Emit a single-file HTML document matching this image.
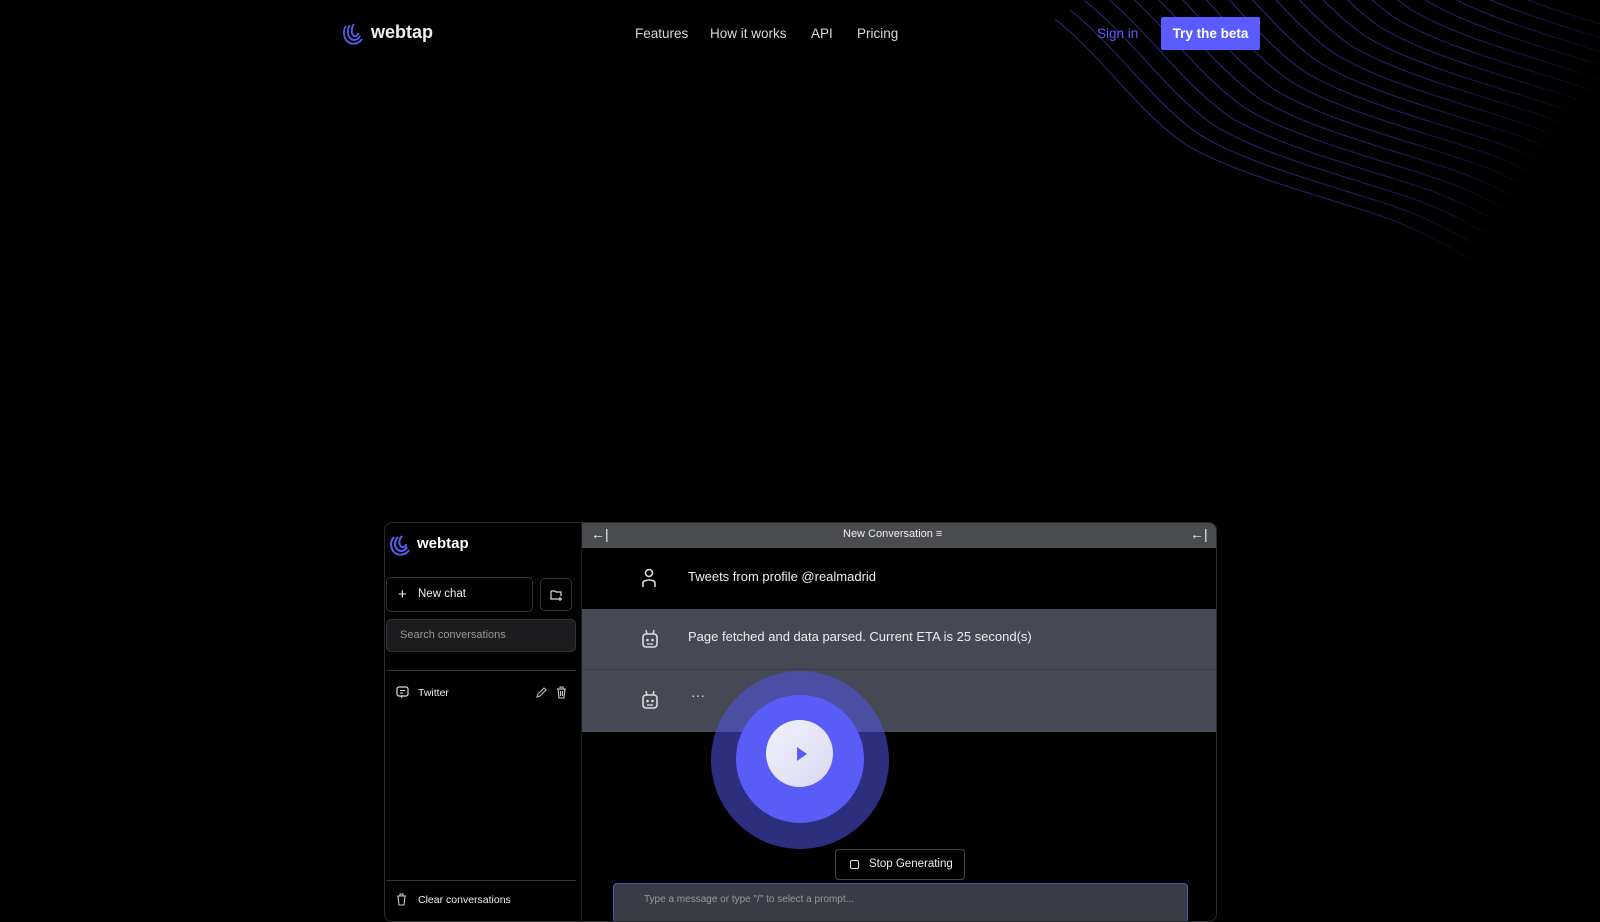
<!DOCTYPE html>
<html><head><meta charset="utf-8"><style>
*{margin:0;padding:0;box-sizing:border-box}
body{width:1600px;height:900px;background:#000;overflow:hidden;position:relative;font-family:"Liberation Sans",sans-serif;color:#e5e7eb}
.a{position:absolute}
.nav{font-size:13.5px;color:#d8d8e0;top:26px}
</style></head><body>
<svg class="a" style="left:0;top:0" width="1600" height="900">
<defs>
<linearGradient id="f" gradientUnits="userSpaceOnUse" x1="1250" y1="40" x2="1520" y2="230"><stop offset="0" stop-color="#fff"/><stop offset="0.55" stop-color="#fff" stop-opacity="0.8"/><stop offset="1" stop-color="#fff" stop-opacity="0"/></linearGradient>
<mask id="m"><rect x="0" y="0" width="1600" height="400" fill="url(#f)"/></mask>
<path id="w" d="M1070,10 C1120,50 1150,100 1200,135 C1250,165 1330,185 1390,205 C1430,218 1470,240 1500,260" fill="none" stroke="#22246a" stroke-width="1.2"/>
</defs>
<g mask="url(#m)">
<use href="#w"/><use href="#w" transform="translate(15,-9)"/><use href="#w" transform="translate(30,-18)"/><use href="#w" transform="translate(45,-27)"/><use href="#w" transform="translate(60,-36)"/><use href="#w" transform="translate(75,-45)"/><use href="#w" transform="translate(90,-54)"/><use href="#w" transform="translate(105,-63)"/><use href="#w" transform="translate(120,-72)"/><use href="#w" transform="translate(135,-81)"/><use href="#w" transform="translate(150,-90)"/><use href="#w" transform="translate(165,-99)"/><use href="#w" transform="translate(180,-108)"/><use href="#w" transform="translate(195,-117)"/><use href="#w" transform="translate(210,-126)"/><use href="#w" transform="translate(225,-135)"/><use href="#w" transform="translate(240,-144)"/><use href="#w" transform="translate(255,-153)"/><use href="#w" transform="translate(270,-162)"/><use href="#w" transform="translate(-15,9)"/>
</g>
</svg>

<!-- nav -->
<svg class="a" style="left:342px;top:22px" width="22" height="24" viewBox="0 0 22 24"><g fill="none" stroke="#5a5cf0" stroke-width="1.8"><path d="M4 4 C1 8 1 16 6 20 C10 23 17 22 20 17"/><path d="M8 3 C5 7 5 14 9 17 C12 19 16 18 18 14"/><path d="M12 2 C9 6 9 12 12 14 C14 15 16 13 16 11"/></g></svg>
<div class="a" style="left:371px;top:22px;font-size:18px;font-weight:bold;color:#eee">webtap</div>
<div class="a nav" style="left:635px">Features</div>
<div class="a nav" style="left:710px">How it works</div>
<div class="a nav" style="left:811px">API</div>
<div class="a nav" style="left:857px">Pricing</div>
<div class="a nav" style="left:1097px;color:#5b5cff">Sign in</div>
<div class="a" style="left:1161px;top:17px;width:99px;height:33px;background:#5b5cff;border-radius:2px;color:#fff;font-size:13.5px;font-weight:bold;text-align:center;line-height:33px">Try the beta</div>

<!-- app panel -->
<div class="a" style="left:384px;top:522px;width:833px;height:400px;border:1px solid #2a2a2e;border-radius:8px;background:#000;overflow:hidden">
 <div class="a" style="left:197px;top:0;width:636px;height:25px;background:#4a4b4f"></div>
 <div class="a" style="left:206px;top:3px;color:#eee;font-size:14px">←|</div>
 <div class="a" style="left:805px;top:3px;color:#eee;font-size:14px">←|</div>
 <div class="a" style="left:458px;top:5px;color:#eee;font-size:11px">New Conversation ≡</div>
 <div class="a" style="left:197px;top:86px;width:636px;height:61px;background:#464953;border-bottom:1px solid #3a3d45"></div>
 <div class="a" style="left:197px;top:147px;width:636px;height:62px;background:#464953"></div>
 <svg class="a" style="left:256px;top:45px" width="16" height="20" viewBox="0 0 16 20"><circle cx="8" cy="5" r="3.5" fill="none" stroke="#ddd" stroke-width="1.6"/><path d="M2 19 V15 C2 11 14 11 14 15 V19" fill="none" stroke="#ddd" stroke-width="1.6"/></svg>
 <div class="a" style="left:303px;top:46px;font-size:13px;color:#eee">Tweets from profile @realmadrid</div>
 <svg class="a" style="left:256px;top:106px" width="18" height="20" viewBox="0 0 18 20"><path d="M5 1 L6 5 M13 1 L12 5" stroke="#ddd" stroke-width="1.5"/><rect x="2" y="5" width="14" height="13" rx="3" fill="none" stroke="#ddd" stroke-width="1.6"/><circle cx="6.5" cy="11" r="1.3" fill="#ddd"/><circle cx="11.5" cy="11" r="1.3" fill="#ddd"/><path d="M6 15 H12" stroke="#ddd" stroke-width="1.3"/></svg>
 <div class="a" style="left:303px;top:106px;font-size:13px;color:#eee">Page fetched and data parsed. Current ETA is 25 second(s)</div>
 <svg class="a" style="left:256px;top:167px" width="18" height="20" viewBox="0 0 18 20"><path d="M5 1 L6 5 M13 1 L12 5" stroke="#ddd" stroke-width="1.5"/><rect x="2" y="5" width="14" height="13" rx="3" fill="none" stroke="#ddd" stroke-width="1.6"/><circle cx="6.5" cy="11" r="1.3" fill="#ddd"/><circle cx="11.5" cy="11" r="1.3" fill="#ddd"/><path d="M6 15 H12" stroke="#ddd" stroke-width="1.3"/></svg>
 <div class="a" style="left:306px;top:164px;font-size:14px;color:#ddd">···</div>
 <div class="a" style="left:450px;top:326px;width:130px;height:31px;border:1px solid #444;border-radius:4px;background:#000;font-size:11.5px;color:#eee;line-height:29px;padding-left:33px">Stop Generating<span style="position:absolute;left:14px;top:10px;width:9px;height:9px;border:1.3px solid #ddd;border-radius:2px"></span></div>
 <div class="a" style="left:228px;top:360px;width:575px;height:40px;border:1.5px solid #4a55c8;border-radius:4px;background:#3a3c45;font-size:10px;color:#999;padding:10px 30px">Type a message or type "/" to select a prompt...</div>
 <!-- sidebar -->
 <svg class="a" style="left:4px;top:11px" width="22" height="22" viewBox="0 0 22 22"><g fill="none" stroke="#5a5cf0" stroke-width="2"><path d="M5 3 C1 7 1 15 6 19 C10 22 17 21 20 16"/><path d="M9 3 C5 7 5 13 9 16 C12 18 16 17 18 13"/><path d="M13 2 C9 6 10 12 13 13 C15 14 17 12 17 10"/></g></svg>
 <div class="a" style="left:32px;top:12px;font-size:15px;font-weight:bold;color:#fff">webtap</div>
 <div class="a" style="left:1px;top:54px;width:147px;height:35px;border:1px solid #333;border-radius:5px;font-size:11.5px;color:#eee;line-height:33px;padding-left:31px"><span style="position:absolute;left:11px;font-size:15px">+</span>New chat</div>
 <div class="a" style="left:155px;top:55px;width:32px;height:33px;border:1px solid #333;border-radius:5px"><svg style="position:absolute;left:9px;top:10px" width="13" height="12" viewBox="0 0 13 12"><path d="M1 2 H5 L6 3 H11 V7 M8 10 H1 V2" fill="none" stroke="#ddd" stroke-width="1.2"/><path d="M10 8 V12 M8 10 H12" stroke="#ddd" stroke-width="1.2"/></svg></div>
 <div class="a" style="left:1px;top:96px;width:190px;height:33px;border:1px solid #333;border-radius:5px;background:#1c1c1e;font-size:11px;color:#999;line-height:31px;padding-left:13px">Search conversations</div>
 <div class="a" style="left:1px;top:147px;width:190px;height:1px;background:#333"></div>
 <svg class="a" style="left:11px;top:163px" width="13" height="13" viewBox="0 0 13 13"><rect x="1" y="1" width="11" height="9" rx="2" fill="none" stroke="#ddd" stroke-width="1.2"/><path d="M4 4.5 H9 M4 7 H7 M5 10 L6 12" stroke="#ddd" stroke-width="1.1"/></svg>
 <div class="a" style="left:33px;top:164px;font-size:10.5px;color:#eee">Twitter</div>
 <svg class="a" style="left:150px;top:163px" width="12" height="13" viewBox="0 0 12 13"><path d="M2 11 L3 8 L9 2 L11 4 L5 10 Z" fill="none" stroke="#bbb" stroke-width="1.1"/></svg>
 <svg class="a" style="left:171px;top:163px" width="11" height="13" viewBox="0 0 11 13"><path d="M1 3 H10 M4 3 V1 H7 V3 M2 3 L3 12 H8 L9 3 M4.5 5 V10 M6.5 5 V10" fill="none" stroke="#ccc" stroke-width="1.1"/></svg>
 <div class="a" style="left:1px;top:357px;width:190px;height:1px;background:#333"></div>
 <svg class="a" style="left:11px;top:370px" width="11" height="13" viewBox="0 0 11 13"><path d="M1 3 H10 M4 3 V1 H7 V3 M2 3 L3 12 H8 L9 3" fill="none" stroke="#ccc" stroke-width="1.1"/></svg>
 <div class="a" style="left:33px;top:371px;font-size:10.5px;color:#eee">Clear conversations</div>
 <div class="a" style="left:196px;top:0;width:1px;height:400px;background:#1a1a1c"></div>
</div>

<!-- play button -->
<div class="a" style="left:711px;top:671px;width:178px;height:178px;border-radius:50%;background:rgba(80,84,230,0.55)"></div>
<div class="a" style="left:736px;top:695px;width:128px;height:128px;border-radius:50%;background:#5a5cf8"></div>
<div class="a" style="left:766px;top:720px;width:67px;height:67px;border-radius:50%;background:linear-gradient(135deg,#f2f2fb,#d8d9f2)"></div>
<div class="a" style="left:797px;top:747px;width:0;height:0;border-left:10px solid #5a5cf8;border-top:7px solid transparent;border-bottom:7px solid transparent"></div>
</body></html>
